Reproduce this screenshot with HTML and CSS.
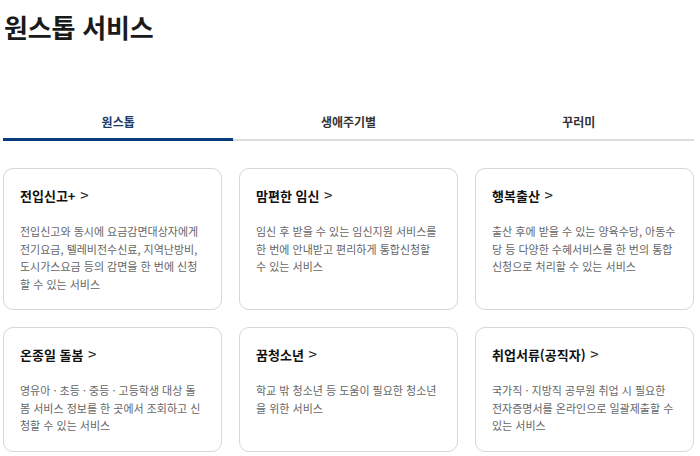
FILE: index.html
```html
<!DOCTYPE html>
<html lang="ko">
<head>
<meta charset="utf-8">
<link rel="stylesheet" href="styles.css">
</head>
<body>
<div class="page">
  <h1 class="title">원스톱 서비스</h1>
  <div class="tabs">
    <div class="tab active">원스톱</div>
    <div class="tab">생애주기별</div>
    <div class="tab">꾸러미</div>
  </div>
  <div class="grid">
    <div class="card">
      <div class="card-title">전입신고+ <span class="chev">&gt;</span></div>
      <p class="card-desc">전입신고와 동시에 요금감면대상자에게 전기요금, 텔레비전수신료, 지역난방비, 도시가스요금 등의 감면을 한 번에 신청할 수 있는 서비스</p>
    </div>
    <div class="card">
      <div class="card-title">맘편한 임신 <span class="chev">&gt;</span></div>
      <p class="card-desc">임신 후 받을 수 있는 임신지원 서비스를 한 번에 안내받고 편리하게 통합신청할 수 있는 서비스</p>
    </div>
    <div class="card">
      <div class="card-title">행복출산 <span class="chev">&gt;</span></div>
      <p class="card-desc">출산 후에 받을 수 있는 양육수당, 아동수당 등 다양한 수혜서비스를 한 번의 통합 신청으로 처리할 수 있는 서비스</p>
    </div>
    <div class="card">
      <div class="card-title">온종일 돌봄 <span class="chev">&gt;</span></div>
      <p class="card-desc">영유아 · 초등 · 중등 · 고등학생 대상 돌봄 서비스 정보를 한 곳에서 조회하고 신청할 수 있는 서비스</p>
    </div>
    <div class="card">
      <div class="card-title">꿈청소년 <span class="chev">&gt;</span></div>
      <p class="card-desc">학교 밖 청소년 등 도움이 필요한 청소년을 위한 서비스</p>
    </div>
    <div class="card">
      <div class="card-title">취업서류(공직자) <span class="chev">&gt;</span></div>
      <p class="card-desc">국가직 · 지방직 공무원 취업 시 필요한 전자증명서를 온라인으로 일괄제출할 수 있는 서비스</p>
    </div>
  </div>
</div>
</body>
</html>
```
FILE: styles.css
```css
html, body {
  margin: 0;
  padding: 0;
  background: #fff;
}
body {
  font-family: "Noto Sans CJK KR", "Noto Sans", sans-serif;
  color: #222;
}
.page {
  width: 691px;
  margin-left: 3px;
}
.title {
  margin: 12px 0 0 1px;
  font-size: 26px;
  line-height: 30px;
  font-weight: 700;
  color: #1a1a1a;
  letter-spacing: -0.2px;
}
.tabs {
  display: flex;
  margin-top: 59px;
}
.tab {
  flex: 1;
  height: 40px;
  box-sizing: border-box;
  display: flex;
  align-items: center;
  justify-content: center;
  font-size: 12px;
  font-weight: 700;
  color: #333;
  border-bottom: 2px solid #dcdcdc;
  padding-top: 2px;
}
.tab.active {
  color: #1d3c6e;
  border-bottom: 3px solid #083b7c;
  padding-top: 3px;
}
.grid {
  display: grid;
  grid-template-columns: repeat(3, 1fr);
  gap: 17px;
  margin-top: 27px;
}
.card {
  border: 1px solid #d6d6d6;
  border-radius: 10px;
  padding: 16px;
}
.card-title {
  font-size: 13px;
  line-height: 20px;
  font-weight: 700;
  color: #111;
}
.chev {
  font-weight: 400;
  font-size: 15px;
  margin-left: 1px;
  color: #222;
}
.card-desc {
  margin: 17px 0 0;
  font-size: 11px;
  line-height: 17.5px;
  color: #666;
}
```
